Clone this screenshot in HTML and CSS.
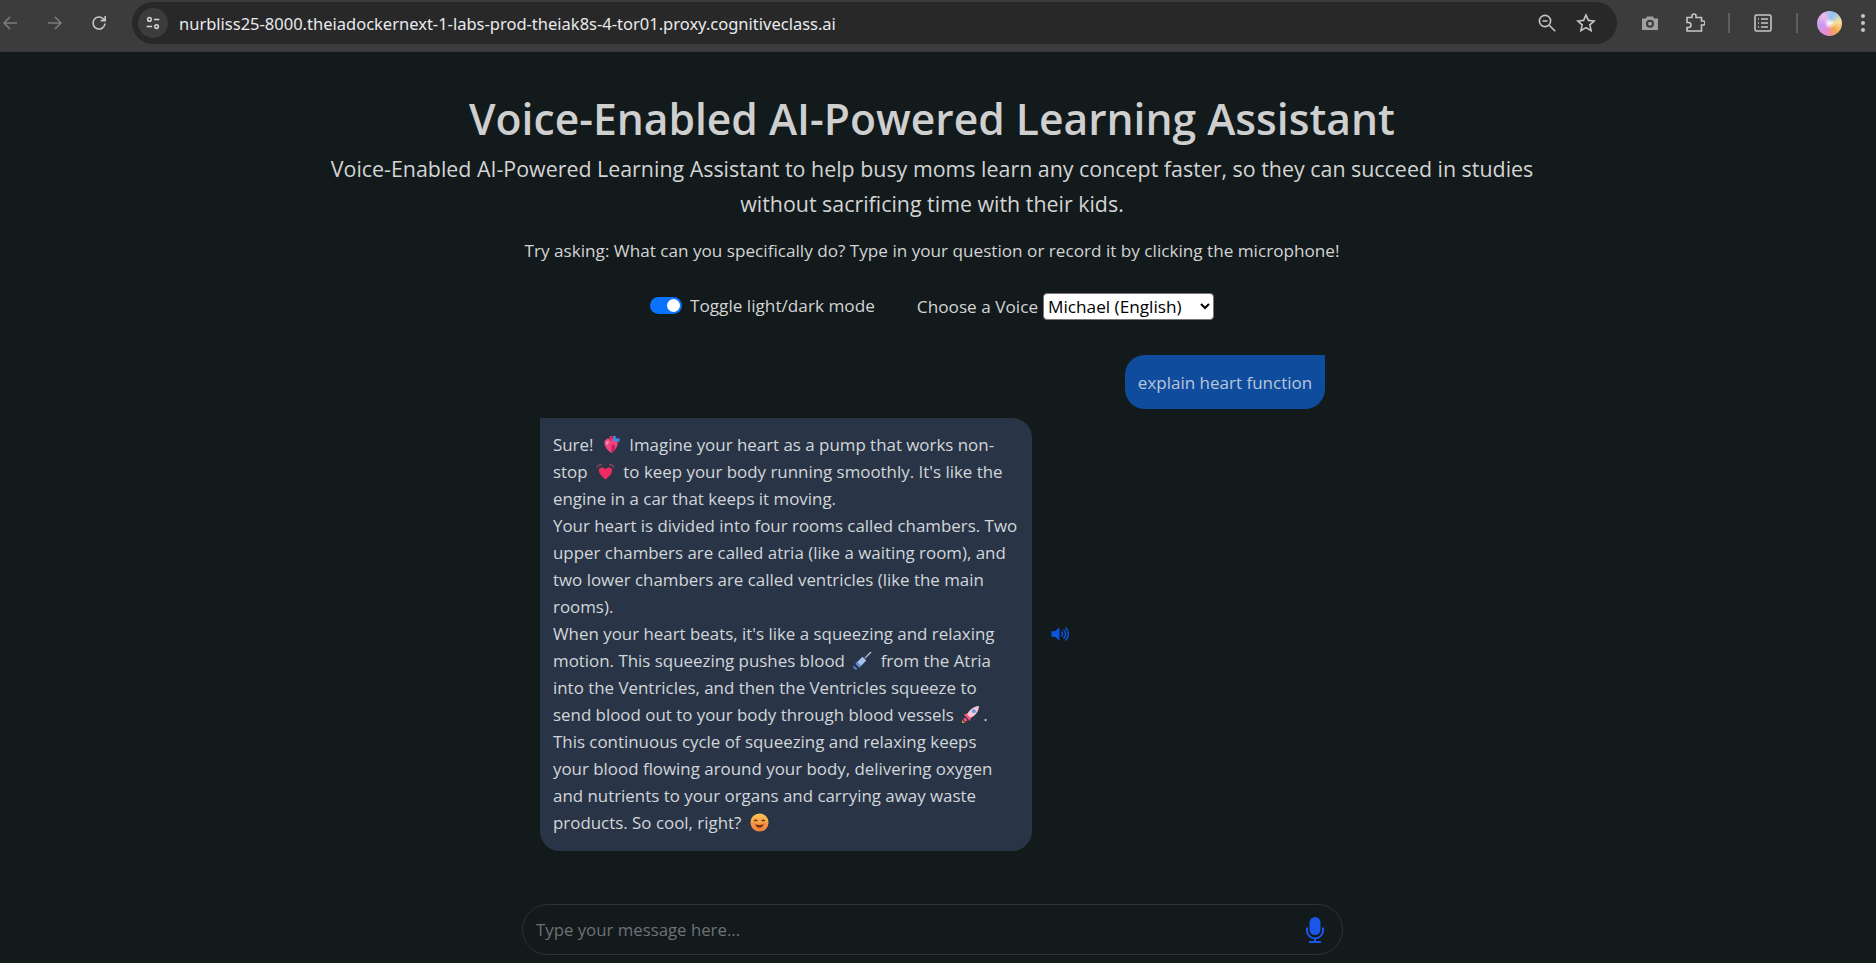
FILE: index.html
```html
<!DOCTYPE html>
<html lang="en">
<head>
<meta charset="utf-8">
<title>Voice-Enabled AI-Powered Learning Assistant</title>
<link rel="stylesheet" href="styles.css">
</head>
<body>
<header class="toolbar">
  <div class="nav">
    <svg class="tb-icon dim back" viewBox="0 0 20 20"><path d="M17 10H4M10 4l-6 6 6 6"/></svg>
    <svg class="tb-icon dim fwd" viewBox="0 0 20 20"><path d="M3 10h13M10 4l6 6-6 6"/></svg>
    <svg class="tb-icon reload" viewBox="0 0 20 20"><path d="M16 10.500A6 6 0 1 1 14.200 5.700L16 7.400M16.200 3v4.600h-4.600"/></svg>
  </div>
  <div class="omnibox">
    <span class="tune"><svg viewBox="0 0 20 20"><circle cx="6" cy="6" r="2"/><path d="M11 6h6M3 14h6"/><circle cx="14" cy="14" r="2"/></svg></span>
    <span class="url">nurbliss25-8000.theiadockernext-1-labs-prod-theiak8s-4-tor01.proxy.cognitiveclass.ai</span>
    <svg class="tb-icon zoom" viewBox="0 0 20 20"><circle cx="8" cy="8" r="5.600"/><path d="M5.500 8h5M12.200 12.200l6 6"/></svg>
    <svg class="tb-icon star" viewBox="0 0 20 20"><path d="M10 2l2.400 5.400 5.800.6-4.400 3.900 1.300 5.700-5.100-3-5.100 3 1.300-5.700L1.800 8l5.800-.6z"/></svg>
  </div>
  <div class="actions">
    <svg class="tb-icon camera" viewBox="0 0 20 20"><path class="solid" d="M2 5.500h4l1-2h6l1 2h4v11.500H2z"/><circle class="lens" cx="10" cy="10.800" r="3"/></svg>
    <svg class="tb-icon puzzle" viewBox="0 0 20 20"><path d="M2 4.500h5V3a2 2 0 0 1 4 0v1.500h5.500V8H18a2 2 0 0 1 0 4h-1.500v6H2v-3.500h1.500a2.500 2.500 0 0 0 0-5H2z"/></svg>
    <span class="sep"></span>
    <svg class="tb-icon list" viewBox="0 0 20 20"><rect x="2" y="2" width="16" height="16" rx="1.500"/><path d="M5 6h1M5 10h1M5 14h1M8 6h7M8 10h7M8 14h7"/></svg>
    <span class="sep"></span>
    <span class="avatar"></span>
    <span class="dots"><i></i><i></i><i></i></span>
  </div>
</header>

<main class="page">
  <h1 class="title">Voice-Enabled AI-Powered Learning Assistant</h1>
  <p class="lead">Voice-Enabled AI-Powered Learning Assistant to help busy moms learn any concept faster, so they can succeed in studies<br>without sacrificing time with their kids.</p>
  <p class="hint">Try asking: What can you specifically do? Type in your question or record it by clicking the microphone!</p>

  <div class="controls">
    <label class="switch-row"><span class="switch"><span class="knob"></span></span>Toggle light/dark mode</label>
    <label class="voice-row">Choose a Voice
      <select class="voice"><option>Michael (English)</option></select>
    </label>
  </div>

  <section class="chat">
    <div class="msg-user">explain heart function</div>
    <div class="msg-row">
      <div class="msg-bot">
        Sure! <svg class="emo" viewBox="0 0 20 20" role="img" aria-label="anatomical heart"><path fill="#f0447e" d="M2.500 8c0-3 3-5 5.500-4 3-1.500 8-.5 8.500 4 .4 4-3 9-6.500 11C6 17 2.500 12 2.500 8z"/><path fill="#f78fb0" d="M4 7.500c1-1.500 3-2 3.500-1C7 9 6 10.500 4.500 10.500z"/><path fill="#3f8fe0" d="M11.500 1h3v5.500h-3z"/><path fill="#e0285f" d="M8 1h3v5H8z"/><path fill="#3f8fe0" d="M14.500 3.500h4V7h-4z"/><path fill="#c91f5e" d="M10 10c3.500 0 5 2 2.500 6.500L10 18.500z"/></svg> Imagine your heart as a pump that works non-<br>
        stop <svg class="emo" viewBox="0 0 20 20" role="img" aria-label="beating heart"><path fill="#ee2a62" d="M10 18.500C5 14.500 3 11.500 3 8.500c0-3 4.500-4 7-1 2.500-3 7-2 7 1 0 3-2 6-7 10z"/><path fill="none" stroke="#d9486f" stroke-width="1" d="M1 6C1.500 3.500 4 2.500 6 3M19 6C18.500 3.500 16 2.500 14 3"/></svg> to keep your body running smoothly. It's like the<br>
        engine in a car that keeps it moving.<br>
        Your heart is divided into four rooms called chambers. Two<br>
        upper chambers are called atria (like a waiting room), and<br>
        two lower chambers are called ventricles (like the main<br>
        rooms).<br>
        When your heart beats, it's like a squeezing and relaxing<br>
        motion. This squeezing pushes blood <svg class="emo" viewBox="0 0 20 20" role="img" aria-label="syringe"><path fill="#a6c0ee" d="M3 13l7-7 4 4-7 7z"/><path fill="#5f86d4" d="M1 15.500l3.500 3.500-1.500 1-3-3zM4.500 11.500l4 4-2 2-4-4z"/><path stroke="#b9c6dc" stroke-width="1.300" d="M12.500 7.500L19 1"/></svg> from the Atria<br>
        into the Ventricles, and then the Ventricles squeeze to<br>
        send blood out to your body through blood vessels <svg class="emo rocket" viewBox="0 0 20 20" role="img" aria-label="rocket"><path fill="#f4517f" d="M3 10l5-1.500 3 3L9.500 17zM4 13l3 3-2.500 1.500-2-2z"/><path fill="#f7c9d6" d="M6.500 10C8.500 5 13 1.500 19 1c-.5 6-4 10.500-9 12.500z"/><circle cx="13.500" cy="6.500" r="2" fill="#5d9be0"/><path fill="#f08030" d="M1 15.500l3.500 3.500H1z"/></svg>.<br>
        This continuous cycle of squeezing and relaxing keeps<br>
        your blood flowing around your body, delivering oxygen<br>
        and nutrients to your organs and carrying away waste<br>
        products. So cool, right? <svg class="emo" viewBox="0 0 20 20" role="img" aria-label="smiling face"><defs><linearGradient id="sm" x1="0" y1="0" x2="0" y2="1"><stop offset="0" stop-color="#fbc64f"/><stop offset="1" stop-color="#f2793c"/></linearGradient></defs><circle cx="10" cy="10" r="9.500" fill="url(#sm)"/><path fill="none" stroke="#5a2c14" stroke-width="1.300" d="M4.500 8.500q1.700-2 3.200 0M12.300 8.500q1.700-2 3.200 0"/><path fill="#7a2e12" d="M5.500 11.500q4.500 2 9 0q-1 4-4.500 4t-4.500-4z"/><circle cx="4.500" cy="11.500" r="1.500" fill="#f3745a" opacity=".7"/><circle cx="15.500" cy="11.500" r="1.500" fill="#f3745a" opacity=".7"/></svg>
      </div>
      <svg class="speaker" viewBox="0 0 17 16" role="img" aria-label="Play"><path class="fill" d="M0 5.300h3.400L8 1.500v13L3.400 10.700H0z"/><path class="arc" d="M10 5.500a3.500 3.500 0 0 1 0 5M12 3.500a6 6 0 0 1 0 9M14 1.500a9 9 0 0 1 0 13"/></svg>
    </div>
  </section>

  <div class="composer">
    <span class="placeholder">Type your message here...</span>
    <svg class="mic" viewBox="0 0 18 26" role="img" aria-label="Record"><rect class="fill" x="3.500" y="0" width="11" height="18" rx="5.500"/><path class="arc" d="M1 10.500v3a8 8 0 0 0 16 0v-3M9 21.500v3M3 25h12"/></svg>
  </div>
</main>
</body>
</html>
```
FILE: styles.css
```css
* { box-sizing: border-box; }
html, body { margin: 0; height: 100%; }
body {
  background: #131a1c;
  color: #d4d4d4;
  font-family: "Open Sans", "Noto Sans", sans-serif;
  font-size: 16px;
  overflow: hidden;
}

/* browser toolbar */
.toolbar {
  display: flex;
  align-items: center;
  height: 52px;
  background: #3c3c3c;
  border-bottom: 1px solid #353535;
  padding-bottom: 5px;
}
.tb-icon { width: 20px; height: 20px; fill: none; stroke: #c4c7c5; stroke-width: 1.600; flex: none; }
.tb-icon.dim { stroke: #7b7b7b; }
.nav { display: flex; align-items: center; width: 132px; padding-right: 23px; justify-content: space-between; }
.omnibox {
  display: flex;
  align-items: center;
  width: 1485px;
  height: 42px;
  background: #282828;
  border-radius: 21px;
  padding: 0 16px 0 6px;
}
.tune {
  width: 30px; height: 30px; border-radius: 50%;
  background: #3c3c3c;
  display: flex; align-items: center; justify-content: center;
  margin-right: 11px;
}
.tune svg { width: 18px; height: 18px; fill: none; stroke: #d6d6d6; stroke-width: 1.700; }
.url { color: #e8eaed; font-family: "Noto Sans", sans-serif; font-size: 16.500px; flex: 1; white-space: nowrap; }
.zoom { margin-right: 19px; }
.star { margin-right: 5px; }
.actions { display: flex; align-items: center; flex: 1; padding-left: 23px; }
.camera { margin-right: 25px; }
.camera .solid { fill: #a0a0a0; stroke: none; }
.camera .lens { fill: #a0a0a0; stroke: #3c3c3c; stroke-width: 2; }
.sep { width: 2px; height: 20px; background: #5e5e5e; margin: 0 23px; }
.avatar {
  width: 25px; height: 25px; border-radius: 50%;
  background:
    radial-gradient(circle at 50% 50%, #fff 0, transparent 30%),
    conic-gradient(from 20deg, #8ec5f5, #f7e0a0, #f5a750, #e88ad0, #c49bf0, #f0b6e8, #8ec5f5);
  margin-left: -4px;
}
.dots { display: flex; flex-direction: column; gap: 3px; margin-left: 19px; }
.dots i { width: 4px; height: 4px; border-radius: 50%; background: #c4c7c5; display: block; }

/* page */
.page {
  width: 1200px;
  margin-left: 332px;
  padding-top: 40px;
  display: flex;
  flex-direction: column;
  align-items: center;
}
.title { margin: 0; font-size: 42.600px; line-height: 53px; font-weight: 600; color: #cfcfcf; white-space: nowrap; }
.lead { margin: 6px 0 0; font-size: 21.400px; line-height: 35px; text-align: center; white-space: nowrap; color: #d4d4d4; }
.hint { margin: 18px 0 0; font-size: 17.150px; line-height: 24px; white-space: nowrap; color: #d4d4d4; }
.controls { display: flex; align-items: center; margin-top: 28px; height: 30px; font-size: 17.200px; }
.switch-row { display: flex; align-items: center; gap: 8px; margin-right: 42px; margin-top: -2px; }
.switch { width: 32px; height: 17px; border-radius: 9px; background: #0b72fb; display: flex; justify-content: flex-end; align-items: center; padding: 2px; }
.knob { width: 13px; height: 13px; border-radius: 50%; background: #fff; }
.voice-row { display: flex; align-items: center; gap: 5px; }
.voice { height: 27px; width: 171px; font-family: inherit; font-size: 17.200px; background: #fff; color: #000; border: 1px solid #767676; border-radius: 4px; padding: 0; }

/* chat */
.chat { width: 822px; margin-top: 34px; display: flex; flex-direction: column; }
.msg-user {
  align-self: flex-end;
  margin-right: 18px;
  width: 200px; height: 54px;
  background: #0f4c9e;
  color: #b9c6d9;
  font-size: 17px;
  border-radius: 20px 0 20px 20px;
  display: flex; align-items: center; justify-content: center;
  white-space: nowrap;
}
.msg-row { display: flex; align-items: center; margin-top: 9px; margin-left: 19px; }
.msg-bot {
  width: 492px;
  background: #293546;
  color: #d2d6db;
  border-radius: 0 20px 20px 20px;
  padding: 13px 13px 15px;
  font-size: 16.900px;
  line-height: 27px;
  white-space: nowrap;
}
.emo { width: 19px; height: 19px; vertical-align: -3px; margin: 0 4px; }
.emo.rocket { margin: 0 3px; }
.speaker { width: 18px; height: 16px; margin: 0 0 2px 19px; }
.fill { fill: #0d55e0; }
.arc { fill: none; stroke: #0d55e0; stroke-width: 1.500; }

/* composer */
.composer {
  width: 821px; height: 51px;
  margin: 53px 0 0 1px;
  border: 1px solid #2e3335;
  border-radius: 26px;
  display: flex; align-items: center; justify-content: space-between;
  padding: 0 18px 0 13px;
  font-size: 16.800px;
}
.placeholder { color: #6c7275; }
.mic { width: 18px; height: 26px; }
.mic .fill { fill: #1a56e8; }
.mic .arc { stroke: #1a56e8; stroke-width: 2; }
```
